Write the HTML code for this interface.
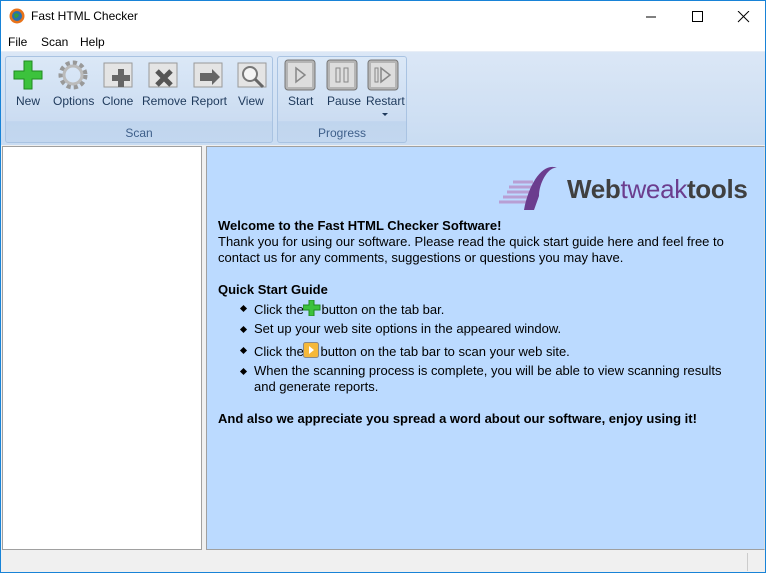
<!DOCTYPE html>
<html><head><style>
*{margin:0;padding:0;box-sizing:border-box}
body{width:766px;height:573px;position:relative;background:#f0f0f0;font-family:"Liberation Sans",Arial,sans-serif;overflow:hidden}
.win{position:absolute;left:0;top:0;width:766px;height:573px;border:1px solid #1883d7;}
.title{position:absolute;left:0;top:0;width:764px;height:30px;background:#fff;font-size:12px;color:#000}
.menu{position:absolute;left:0;top:30px;width:764px;height:20px;background:#fff;font-size:12px}
.menu span{position:absolute;top:4px}
.ribbon{position:absolute;left:0;top:50px;width:764px;height:94px;background:linear-gradient(#dbe7f6,#c9dcf2);border-top:1px solid #e8eef7}
.grp{position:absolute;top:4px;height:87px;border:1px solid #a9c3e2;border-radius:3px;background:linear-gradient(#dbe8f7 0%,#cbdcf1 75%,#c0d5ee 76%,#c3d7ef 100%)}
.grp .lbl{position:absolute;bottom:2px;width:100%;text-align:center;font-size:12px;color:#3e5f8a}
.btn{position:absolute;top:37px;font-size:12px;color:#1e395b;text-align:center}
.ico{position:absolute;top:2px;width:32px;height:32px}
.panel{position:absolute;top:145px;height:404px}
p{font-size:13px;line-height:16px;color:#000}
.li{position:absolute;left:240px;font-size:13px;line-height:16px}
.li:before{content:"";position:absolute;left:0;top:6px;width:5px;height:5px;background:#000;transform:rotate(45deg)}
.li span{margin-left:13px}
.li svg{vertical-align:-2px}
</style></head><body>
<div class="win">
<div class="title">
 <svg style="position:absolute;left:8px;top:7px" width="16" height="16"><circle cx="8" cy="8" r="7.5" fill="#e8731a"/><circle cx="8" cy="8" r="5" fill="#2a6fb0"/><path d="M5 6 q3 -2 5 1 q-1 3 -4 3z" fill="#3a9a3a"/></svg>
 <span style="position:absolute;left:30px;top:8px">Fast HTML Checker</span>
 <svg style="position:absolute;left:645px;top:10px" width="110" height="12" stroke="#000" fill="none"><path d="M0 6h10"/><rect x="46.5" y="0.5" width="10" height="10"/><path d="M92 0l11 11M103 0l-11 11"/></svg>
</div>
<div class="menu"><span style="left:7px">File</span><span style="left:40px">Scan</span><span style="left:79px">Help</span></div>
<div class="ribbon">
 <div class="grp" style="left:4px;width:268px">
  <svg class="ico" style="left:6px" viewBox="0 0 32 32"><path d="M12 2h8v10h10v8H20v10h-8V20H2v-8h10z" fill="#3cc23c" stroke="#1f8a1f"/></svg>
  <svg class="ico" style="left:51px" viewBox="0 0 32 32"><circle cx="16" cy="16" r="12" fill="none" stroke="#999" stroke-width="5" stroke-dasharray="4 3"/><circle cx="16" cy="16" r="9" fill="none" stroke="#bbb" stroke-width="3"/></svg>
  <svg class="ico" style="left:96px" viewBox="0 0 32 32"><rect x="2" y="4" width="28" height="24" fill="#e4e4e4" stroke="#999"/><path d="M16 10h6v6h6v6h-6v6h-6v-6h-6v-6h6z" fill="#666"/></svg>
  <svg class="ico" style="left:141px" viewBox="0 0 32 32"><rect x="2" y="4" width="28" height="24" fill="#e4e4e4" stroke="#999"/><path d="M10 12l14 14M24 12L10 26" stroke="#555" stroke-width="5"/></svg>
  <svg class="ico" style="left:186px" viewBox="0 0 32 32"><rect x="2" y="4" width="28" height="24" fill="#e4e4e4" stroke="#999"/><path d="M8 14h12v-4l8 8-8 8v-4H8z" fill="#666"/></svg>
  <svg class="ico" style="left:230px" viewBox="0 0 32 32"><rect x="2" y="4" width="28" height="24" fill="#e4e4e4" stroke="#999"/><circle cx="14" cy="15" r="7" fill="#f4f4f4" stroke="#777" stroke-width="2"/><path d="M19 20l8 8" stroke="#666" stroke-width="3"/></svg>
  <div class="btn" style="left:10px">New</div>
  <div class="btn" style="left:47px">Options</div>
  <div class="btn" style="left:96px">Clone</div>
  <div class="btn" style="left:136px">Remove</div>
  <div class="btn" style="left:185px">Report</div>
  <div class="btn" style="left:232px">View</div>
  <div class="lbl">Scan</div>
 </div>
 <div class="grp" style="left:276px;width:130px">
  <svg class="ico" style="left:6px" viewBox="0 0 32 32"><rect x="1" y="1" width="30" height="30" rx="3" fill="#b5b5b5" stroke="#777"/><rect x="4" y="4" width="24" height="24" fill="#ddd"/><path d="M12 9l9 7-9 7z" fill="none" stroke="#888" stroke-width="1.5"/></svg>
  <svg class="ico" style="left:48px" viewBox="0 0 32 32"><rect x="1" y="1" width="30" height="30" rx="3" fill="#b5b5b5" stroke="#777"/><rect x="4" y="4" width="24" height="24" fill="#ddd"/><rect x="10" y="9" width="4" height="14" fill="none" stroke="#888"/><rect x="18" y="9" width="4" height="14" fill="none" stroke="#888"/></svg>
  <svg class="ico" style="left:89px" viewBox="0 0 32 32"><rect x="1" y="1" width="30" height="30" rx="3" fill="#b5b5b5" stroke="#777"/><rect x="4" y="4" width="24" height="24" fill="#ddd"/><rect x="8" y="9" width="3" height="14" fill="none" stroke="#888"/><path d="M14 9l9 7-9 7z" fill="none" stroke="#888" stroke-width="1.5"/></svg>
  <div class="btn" style="left:10px">Start</div>
  <div class="btn" style="left:49px">Pause</div>
  <div class="btn" style="left:88px">Restart</div>
  <div style="position:absolute;left:104px;top:56px;border:3px solid transparent;border-top:3px solid #1e395b"></div>
  <div class="lbl">Progress</div>
 </div>
</div>
<div class="panel" style="left:1px;width:200px;background:#fff;border:1px solid #a0a0a0"></div>
<div class="panel" style="left:205px;width:559px;background:#bbdaff;border:1px solid #a0a0a0;border-right:1px solid #ddd">
 <svg style="position:absolute;left:292px;top:15px" width="60" height="50"><path d="M8 30h28M4 35h30M0 40h30M10 25h24M14 20h20" stroke="#b89fd4" stroke-width="3"/><path d="M25 48 C30 20 45 0 58 6 C50 4 40 20 40 34 L35 48z" fill="#6b3d8e"/></svg>
 <div style="position:absolute;left:360px;top:27px;font-size:26px;font-weight:bold;color:#404040;letter-spacing:-0.3px">Web<span style="color:#6b3d8e;font-weight:normal">tweak</span>tools</div>
 <p style="position:absolute;left:11px;top:71px;width:530px"><b>Welcome to the Fast HTML Checker Software!</b><br>Thank you for using our software. Please read the quick start guide here and feel free to contact us for any comments, suggestions or questions you may have.</p>
 <p style="position:absolute;left:11px;top:135px"><b>Quick Start Guide</b></p>
</div>
<div class="li" style="top:299px"><span>Click the <svg width="18" height="16" viewBox="0 0 18 16" style="margin-left:-4px"><path d="M6 0h5v5h6v5h-6v6H6v-6H0V5h6z" fill="#3cc23c" stroke="#1f8a1f"/></svg>button on the tab bar.</span></div>
<div class="li" style="top:320px"><span>Set up your web site options in the appeared window.</span></div>
<div class="li" style="top:341px"><span>Click the <svg width="17" height="16" style="margin-left:-4px"><rect x="0.5" y="0.5" width="15" height="15" rx="2" fill="#f5b83a" stroke="#888"/><path d="M6 4l5 4-5 4z" fill="#fff"/></svg>button on the tab bar to scan your web site.</span></div>
<div class="li" style="top:362px;width:500px"><span style="display:block;padding-left:13px;margin-left:0">When the scanning process is complete, you will be able to view scanning results and generate reports.</span></div>
<p style="position:absolute;left:217px;top:410px"><b>And also we appreciate you spread a word about our software, enjoy using it!</b></p>
<div style="position:absolute;left:746px;top:552px;width:1px;height:18px;background:#ccc"></div>
</div>
</body></html>
